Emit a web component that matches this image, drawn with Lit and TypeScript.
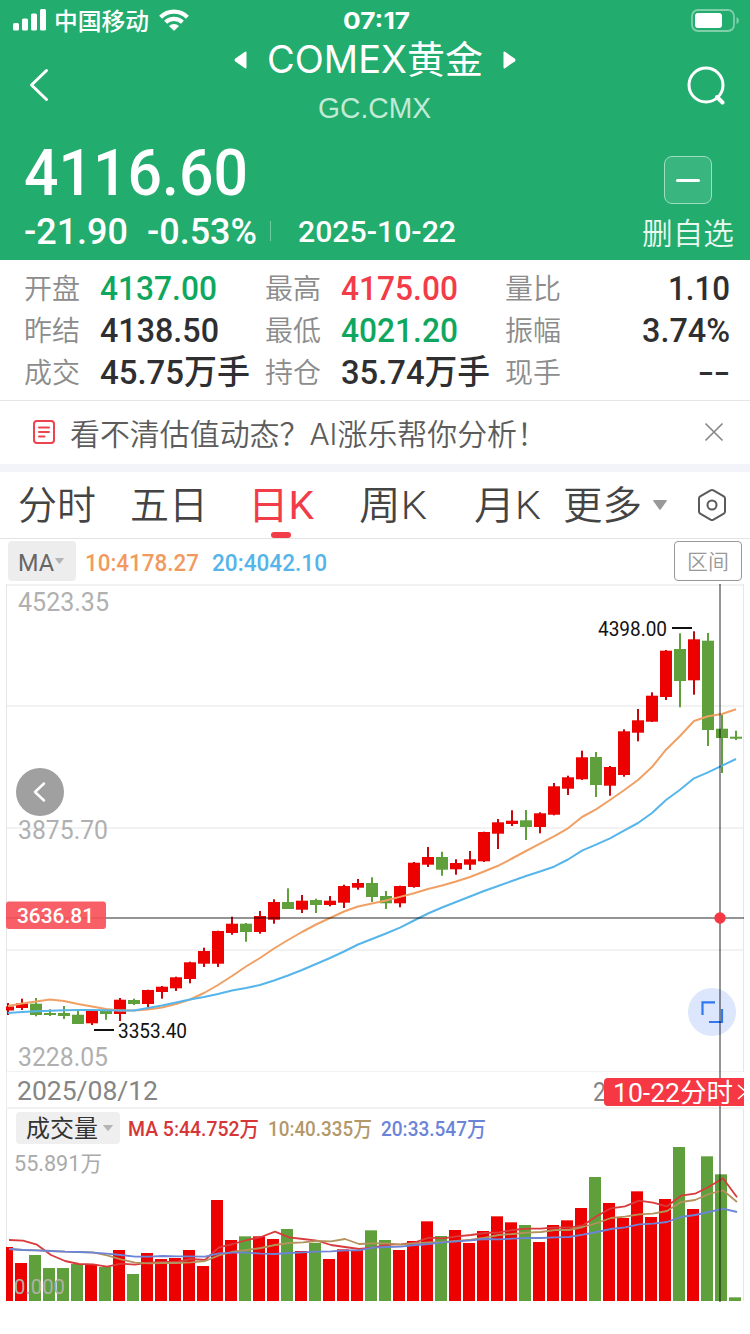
import { LitElement, html, svg, css } from "lit";
import { customElement, property } from "lit/decorators.js";

type Candle = [up: number, top: number, bottom: number, high: number, low: number];

const STEP = 14;
const candles: Candle[] = [
  [1, 1006.5, 1010.5, 1003, 1015], [1, 1003.3, 1008, 998.7, 1010], [0, 1003.7, 1015, 998, 1016.3],
  [0, 1013, 1015, 1009.3, 1016], [0, 1013, 1016, 1006, 1019], [0, 1014.7, 1024, 1010.7, 1024],
  [1, 1010.7, 1023.3, 1009.3, 1025], [0, 1011, 1014, 1010, 1019.7], [1, 999.7, 1014, 998, 1021],
  [0, 1000, 1004, 998.7, 1005], [1, 990, 1004, 989.7, 1007], [1, 986.7, 992, 986, 998.7],
  [1, 977.3, 988.3, 976.7, 991], [1, 962.3, 979, 961.7, 983.3], [1, 951, 963.7, 947.7, 967],
  [1, 931, 963.7, 930.7, 967], [1, 923.7, 933, 916.7, 934.7], [0, 923.7, 932, 923, 941.7],
  [1, 916, 932, 911, 933.7], [1, 902, 919.7, 899.3, 923.7], [0, 902, 909, 888.3, 909],
  [1, 900.7, 909.7, 895, 913], [0, 900, 905, 898.7, 913], [1, 900.7, 905, 896, 906.3],
  [1, 886, 902.7, 884.7, 908], [1, 883, 887.7, 879, 889.7], [0, 883, 897, 877.3, 902],
  [0, 896, 903.3, 891, 909], [1, 886, 903.3, 885.7, 907.3], [1, 862.7, 887, 862, 887.7],
  [1, 857, 864.7, 847, 867], [0, 857, 869.7, 851.7, 875.7], [1, 863, 869.3, 859.3, 874.7],
  [1, 859.3, 864.7, 851, 870], [1, 832, 861.3, 831.7, 862], [1, 822.3, 833.7, 819, 849],
  [1, 820.7, 824, 810.3, 826], [0, 820.3, 827, 810, 840], [1, 813.3, 827, 812.3, 833.3],
  [1, 786.3, 814.7, 783, 815.3], [1, 777.3, 788.7, 775.7, 795], [1, 757.3, 779.3, 750.7, 780],
  [0, 757, 785, 752, 797], [1, 767, 785.7, 766, 795.7], [1, 731.3, 775, 729.3, 776.7],
  [1, 720.3, 732.7, 709, 741.3], [1, 695.7, 721.7, 692.3, 722], [1, 650.7, 697, 650, 700],
  [0, 649, 681, 633.3, 707.3], [1, 639.3, 680.3, 631.3, 694.7], [0, 640.7, 730, 633, 746],
  [0, 728.7, 738, 715, 773], [0, 736.7, 738.7, 730.7, 740],
];

const ma10 = [
  1006, 1003.5, 1001.5, 999.5, 1001, 1004, 1006.5, 1009, 1010.5, 1010.5, 1009.5, 1007.5, 1004, 999.5, 993, 985, 976,
  966.5, 958, 948.5, 940, 932, 924.5, 918, 911.5, 906.5, 903.5, 900.5, 896.9, 893.3, 889, 885.5, 881.5, 877, 871.5,
  865.8, 858.5, 851, 843.7, 836.3, 828.3, 817, 809.3, 800, 790.3, 780, 767, 749.7, 736, 721, 716.3, 714, 709.3,
];
const ma20 = [
  1013, 1012, 1011.3, 1010.7, 1010.2, 1010, 1010, 1010.3, 1010.5, 1010.5, 1008, 1005.5, 1002.5, 999.5, 997, 994, 990.5,
  988, 985, 980.5, 975.5, 970, 964, 958, 951.5, 944.5, 939, 933.5, 927.7, 920.5, 913.5, 907.5, 902, 896.5, 891, 886,
  881, 876, 871.5, 866.7, 859.5, 850.7, 844.7, 838.3, 830.7, 823, 813, 800, 789.7, 778.3, 772.3, 765.7, 759,
];

/* Heights are in thirds of a pixel, measured down from the volume pane's header. */
const volume = [
  531, 579, 555, 594, 594, 582, 582, 591, 540, 612, 549, 567, 564, 540, 588, 390, 510, 499, 499, 507, 477, 543, 519,
  567, 538, 540, 481, 510, 540, 513, 454, 498, 480, 519, 483, 439, 457, 465, 516, 465, 451, 414, 321, 399, 444, 364,
  441, 387, 231, 417, 259, 313, 682,
];
const vol5 = [
  510, 512, 524, 555, 573, 582, 583, 590, 581, 584, 578, 576, 576, 567, 570, 532, 522, 510, 501, 485, 502, 507, 512,
  525, 531, 537, 533, 524, 523, 517, 503, 505, 499, 495, 489, 487, 480, 476, 476, 472, 473, 466, 438, 415, 409, 392,
  398, 409, 377, 371, 350, 325, 382,
];
const vol10 = [
  537, 540, 541, 543, 545, 546, 547, 556, 568, 578, 580, 579, 579, 577, 573, 556, 545, 540, 534, 525, 519, 517, 513,
  514, 507, 522, 520, 520, 524, 520, 517, 516, 513, 509, 503, 495, 492, 488, 486, 480, 480, 471, 459, 444, 440, 433,
  431, 423, 396, 390, 372, 361, 396,
];
const vol20 = [
  537, 540, 541, 543, 545, 546, 548, 551, 555, 560, 560, 558, 559, 559, 560, 550, 548, 548, 551, 552, 549, 547, 545,
  544, 541, 541, 533, 531, 530, 525, 522, 517, 514, 511, 507, 508, 506, 504, 504, 502, 501, 494, 486, 477, 472, 463,
  461, 456, 441, 435, 426, 416, 426,
];

const volY = (v: number) => 1070 + v / 3;
const line = (ys: number[], dx = 8) => ys.map((y, i) => `${dx + i * STEP},${y.toFixed(1)}`).join(" ");

/** A single run of text set to an exact width; the box is as tall as the capitals. */
@customElement("fit-text")
export class FitText extends LitElement {
  @property() text = "";
  @property({ type: Number }) size = 24;
  @property({ type: Number }) width = 100;

  static styles = css`
    :host { display: block; flex: none; line-height: 0; }
    svg { display: block; overflow: visible; }
    text { fill: currentColor; white-space: pre; }
  `;

  render() {
    const h = Math.round(this.size * 0.71);
    return html`<svg width=${this.width} height=${h}>
      <text x="0" y=${h} font-size=${this.size} textLength=${this.width} lengthAdjust="spacingAndGlyphs">${this.text}</text>
    </svg>`;
  }
}

const fit = (text: string, size: number, width: number, cls = "") =>
  html`<fit-text class=${cls} .text=${text} .size=${size} .width=${width}></fit-text>`;

@customElement("app-root")
export class AppRoot extends LitElement {
  static styles = css`
    :host {
      display: block; width: 750px; height: 1334px; overflow: hidden; background: #fff; color: #333;
      font-family: Roboto, "Noto Sans CJK SC", sans-serif;
    }
    * { box-sizing: border-box; }
    svg { display: block; flex: none; }
    .head { height: 260px; background: #22ac6e; color: #fff; }
    .sans { font-family: Inter, "Noto Sans CJK SC", sans-serif; }
    .arial { font-family: "Liberation Sans", "Noto Sans CJK SC", sans-serif; }
    .medium { font-weight: 500; }
    .bold { font-weight: 700; }
    .light { font-weight: 350; }

    .status { height: 40px; display: grid; grid-template-columns: 1fr auto 1fr; align-items: center; padding: 0 11px 0 13px; }
    .carrier { display: flex; align-items: center; gap: 8px; }
    .carrier .name { margin-top: 3px; }
    .carrier .wifi { margin-left: 2px; }
    .battery { justify-self: end; }

    .nav { height: 90px; display: grid; grid-template-columns: 39px 1fr 39px; align-items: center; padding: 0 24px 0 29px; }
    .heading { display: flex; flex-direction: column; align-items: center; height: 90px; padding: 6px 0 0 0; margin-right: 6px; }
    .title { display: flex; align-items: center; gap: 20px; height: 27px; }
    .code { margin-top: 24px; color: #c3ead7; }

    .quote { display: flex; justify-content: space-between; height: 130px; padding: 0 16px 0 24px; }
    .price { margin-top: 19px; }
    .delta { display: flex; align-items: center; height: 26px; margin-top: 23px; }
    .delta .pct { margin-left: 19px; }
    .delta .sep { width: 1px; height: 20px; margin: 0 27px 0 13px; background: #6fcaa0; }
    .watch { display: flex; flex-direction: column; align-items: center; padding-top: 26px; }
    .minus { width: 48px; height: 48px; border: 1px solid #9fdcc0; border-radius: 8px; background: #39b57f; display: flex; align-items: center; justify-content: center; }
    .minus i { width: 24px; height: 3px; border-radius: 2px; background: #fff; }
    .watch .label { margin-top: 19px; color: #e9f8f0; }

    .facts { height: 141px; border-bottom: 1px solid #e6e6e6; padding: 8px 20px 0 24px; display: grid; grid-template-columns: 76px 165px 76px 164px 76px 1fr; grid-auto-rows: 42px; align-items: center; }
    .facts .k { color: #8c8c8c; }
    .facts .v { color: #2f2f31; font-weight: 500; margin-top: -2px; }
    .facts .end { justify-self: end; }
    .facts .down { color: #0fa75f; }
    .facts .up { color: #f23c48; }

    .banner { height: 71px; border-bottom: 8px solid #f3f4f9; display: flex; align-items: center; padding: 0 26px 1px 32px; color: #5c5c5c; }
    .banner .msg { margin: 4px auto 0 14px; }

    .tabs { height: 67px; border-bottom: 1px solid #e3e3e3; display: flex; align-items: center; padding-left: 18px; color: #444; }
    .tabs > * + * { margin-left: var(--gap, 0); }
    .tab2 { --gap: 34px; } .tab3 { --gap: 40px; } .tab4 { --gap: 45px; } .tab5 { --gap: 47px; } .tab6 { --gap: 22px; }
    .caret { --gap: 11px; } .gear { --gap: 29px; }
    .active { color: #f23c48; display: flex; flex-direction: column; align-items: center; height: 28px; }
    .active i { width: 20px; height: 6px; border-radius: 3px; background: #f23c48; margin: 13px 0 0 0; flex: none; }

    .ma { height: 45px; display: flex; align-items: center; padding: 0 8px 1px; }
    .chip { display: flex; align-items: center; background: #ededed; border-radius: 4px; flex: none; }
    .ma .chip { width: 68px; height: 40px; padding-left: 10px; gap: 1px; color: #666; }
    .ma .chip fit-text { margin-top: 3px; }
    .ma .a { margin: 3px 0 0 9px; color: #f19a60; }
    .ma .b { margin: 3px 0 0 13px; color: #55b4ea; }
    .range { margin-left: auto; width: 68px; height: 40px; border: 1px solid #999; border-radius: 4px; display: flex; align-items: center; justify-content: center; color: #999; }

    .chart { position: relative; height: 750px; }
    .dates { height: 36px; margin: 0 6px; padding: 2px 0 0 10px; display: flex; align-items: center; justify-content: space-between; border-left: 1px solid #ececec; color: #858585; overflow: hidden; }
    .dates .last { display: flex; align-items: center; margin-top: 2px; }
    .tag { height: 28px; width: 140px; margin-left: -2px; background: #f53844; border-radius: 4px 0 0 4px; color: #fff; display: flex; align-items: center; padding-left: 9px; gap: 4px; overflow: hidden; }
    .tag fit-text { margin-top: 2px; }
    .legend { height: 40px; display: flex; align-items: center; padding: 0 16px; }
    .legend .chip { width: 104px; height: 32px; background: #efefef; padding-left: 10px; gap: 5px; color: #333; }
    .legend .five { margin: 0 0 0 8px; color: #d63637; }
    .legend .ten { margin: 0 0 0 9px; color: #b3986a; }
    .legend .twenty { margin: 0 0 0 9px; color: #6c84d8; }
    .volumes { overflow: visible; }
    .overlay { position: absolute; left: 0; top: 0; }
  `;

  private caret(w: number, h: number, color: string, cls = "") {
    return html`<svg class=${cls} width=${w} height=${h} viewBox="0 0 10 6" preserveAspectRatio="none"><path d="M.5 0H9.5Q10.2 0 9.8.6L5.6 5.6Q5 6.2 4.4 5.6L.2.6Q-.2 0 .5 0Z" fill=${color} /></svg>`;
  }

  private header() {
    return html`<header class="head">
      <div class="status">
        <div class="carrier">
          <svg width="33" height="22" fill="#fff"><rect y="14" width="6" height="7.500" rx="1.5" /><rect x="9" y="9.500" width="6" height="12" rx="1.500" /><rect x="18" y="4.500" width="6" height="17" rx="1.500" /><rect x="27" y="0" width="6" height="21.500" rx="1.500" /></svg>
          ${fit("中国移动", 23.5, 95, "name medium")}
          <svg class="wifi" width="30" height="22" viewBox="0 0 30 22"><g fill="none" stroke="#fff" stroke-width="4.2"><path d="M1.600 8.200A19 19 0 0 1 28.400 8.200" /><path d="M6.600 13.300A12 12 0 0 1 23.400 13.300" /></g><path d="M10 16.900A7.200 7.200 0 0 1 20 16.900L15.700 21.300Q15 22 14.300 21.300Z" fill="#fff" /></svg>
        </div>
        ${fit("07:17", 23.5, 67, "sans bold")}
        <svg class="battery" width="48" height="23"><rect x="1" y="1" width="42" height="21" rx="6" fill="none" stroke="#7fcfa9" stroke-width="1.800" /><rect x="4" y="4" width="27" height="15" rx="3" fill="#fff" /><path d="M45.500 8Q48 9 48 11.500T45.500 15Z" fill="#7fcfa9" /></svg>
      </div>
      <div class="nav">
        <svg width="20" height="34" fill="none" stroke="#fff" stroke-width="3" stroke-linecap="round" stroke-linejoin="round"><path d="M17.500 2.500L2.500 17L17.500 31.500" /></svg>
        <div class="heading">
          <div class="title">
            <svg width="13" height="18"><path d="M12.500 1.500V16.500Q12.500 18 11 17.200L1 10.200Q0 9 1 7.800L11 .8Q12.500 0 12.500 1.500Z" fill="#fff" /></svg>
            ${fit("COMEX黄金", 38, 216, "sans")}
            <svg width="13" height="18"><path d="M.5 1.500V16.500Q.5 18 2 17.200L12 10.200Q13 9 12 7.800L2 .8Q.5 0 .5 1.500Z" fill="#fff" /></svg>
          </div>
          ${fit("GC.CMX", 29, 113, "code arial")}
        </div>
        <svg width="39" height="39" fill="none" stroke="#fff" stroke-width="3"><circle cx="19" cy="19" r="17" /><path d="M30 31L35.500 36.500" stroke-width="4" stroke-linecap="round" /></svg>
      </div>
      <div class="quote">
        <div>
          ${fit("4116.60", 65, 224, "price medium")}
          <div class="delta">
            ${fit("-21.90", 36, 104, "medium")}${fit("-0.53%", 36, 110, "pct medium")}<i class="sep"></i>${fit("2025-10-22", 30, 158, "medium")}
          </div>
        </div>
        <div class="watch"><div class="minus"><i></i></div>${fit("删自选", 30, 92, "label light")}</div>
      </div>
    </header>`;
  }

  private facts() {
    return html`<section class="facts">
      ${fit("开盘", 28, 56, "k light")}${fit("4137.00", 34, 117, "v down")}
      ${fit("最高", 28, 56, "k light")}${fit("4175.00", 34, 117, "v up")}
      ${fit("量比", 28, 56, "k light")}${fit("1.10", 34, 62, "v end")}
      ${fit("昨结", 28, 56, "k light")}${fit("4138.50", 34, 119, "v")}
      ${fit("最低", 28, 56, "k light")}${fit("4021.20", 34, 117, "v down")}
      ${fit("振幅", 28, 56, "k light")}${fit("3.74%", 34, 88, "v end")}
      ${fit("成交", 28, 56, "k light")}${fit("45.75万手", 34, 150, "v")}
      ${fit("持仓", 28, 56, "k light")}${fit("35.74万手", 34, 149, "v")}
      ${fit("现手", 28, 56, "k light")}${fit("--", 34, 32, "v end")}
    </section>`;
  }

  private tabs() {
    return html`<nav class="tabs">
      ${fit("分时", 39, 78, "light")}${fit("五日", 39, 78, "tab2 light")}
      <div class="active tab3">${fit("日K", 39, 66)}<i></i></div>
      ${fit("周K", 39, 68, "tab4 light")}${fit("月K", 39, 67, "tab5 light")}${fit("更多", 39, 79, "tab6 light")}
      ${this.caret(14, 10, "#999", "caret")}
      <svg class="gear" width="32" height="34" fill="none" stroke="#5a5a5a" stroke-width="2"><path d="M14.500 2.300Q16 1.500 17.500 2.300L27.800 8.300Q29 9 29 10.500V23.500Q29 25 27.800 25.700L17.500 31.700Q16 32.500 14.500 31.700L4.200 25.700Q3 25 3 23.500V10.500Q3 9 4.200 8.300Z" /><circle cx="16" cy="17" r="4.500" /></svg>
    </nav>`;
  }

  private price() {
    return html`<svg width="750" height="488" viewBox="0 584 750 488">
      <g fill="#f2f2f2">${[584, 705, 827, 949, 1071].map((y) => svg`<rect x="6" y=${y} width="738" height="2" />`)}
        <rect x="6" y="584" width="1" height="488" fill="#e6e6e6" /><rect x="743" y="584" width="1" height="488" fill="#e6e6e6" /></g>
      <g font-size="26" fill="#b0b0b0">
        <text x="18" y="611" textLength="91" lengthAdjust="spacingAndGlyphs">4523.35</text>
        <text x="18" y="838.500" textLength="90" lengthAdjust="spacingAndGlyphs">3875.70</text>
        <text x="18" y="1066" textLength="90" lengthAdjust="spacingAndGlyphs">3228.05</text>
      </g>
      <clipPath id="pane"><rect x="6" y="584" width="738" height="488" /></clipPath>
      <g clip-path="url(#pane)">
        ${candles.map(([up, top, bottom, high, low], i) => {
          const x = 8 + i * STEP;
          return svg`<rect x=${x - 1} y=${high} width="2" height=${low - high} fill=${up ? "#c40810" : "#5f9f3c"} /><rect x=${x - 6} y=${top} width="12" height=${bottom - top} fill=${up ? "#ec0000" : "#5f9f3c"} />`;
        })}
      </g>
      <g fill="none" stroke-width="2" stroke-linejoin="round">
        <polyline points=${line(ma10)} stroke="#f0a064" /><polyline points=${line(ma20)} stroke="#56b5ea" />
      </g>
      <g font-size="20" fill="#111">
        <rect x="94" y="1029" width="20" height="2" /><text x="118" y="1038" textLength="69" lengthAdjust="spacingAndGlyphs">3353.40</text>
        <rect x="672" y="627" width="20" height="2" /><text x="598" y="636" textLength="69" lengthAdjust="spacingAndGlyphs">4398.00</text>
      </g>
    </svg>`;
  }

  private volumes() {
    return html`<svg class="volumes" width="750" height="186" viewBox="0 1148 750 186">
      <rect x="6" y="1109" width="1" height="192" fill="#e6e6e6" /><rect x="743" y="1109" width="1" height="192" fill="#e6e6e6" />
      <text x="14" y="1171" font-size="22" fill="#aaa" textLength="88" lengthAdjust="spacingAndGlyphs">55.891万</text>
      ${volume.map((v, i) => {
        const x = Math.max(6, 1 + i * STEP);
        return svg`<rect x=${x} y=${volY(v)} width=${i ? 12 : 7} height=${1301 - volY(v)} fill=${candles[i][0] ? "#ec0000" : "#5f9f3c"} />`;
      })}
      <g fill="none" stroke-width="1.800" stroke-linejoin="round">
        <polyline points=${line(vol5.map(volY), 9)} stroke="#d93a3c" />
        <polyline points=${line(vol10.map(volY), 9)} stroke="#b3925c" />
        <polyline points=${line(vol20.map(volY), 9)} stroke="#6c84d8" />
      </g>
      <text x="14" y="1294" font-size="21" fill="#b0b0a8" textLength="51" lengthAdjust="spacingAndGlyphs">0.000</text>
    </svg>`;
  }

  private overlay() {
    return html`<svg class="overlay" width="750" height="750" viewBox="0 584 750 750">
      <rect x="6" y="1107" width="738" height="2" fill="#f2f2f2" />
      <circle cx="712" cy="1012" r="24" fill="#dce7fd" />
      <path d="M702.500 1015V1002.300H715M722 1009V1022H709" fill="none" stroke="#2f78f0" stroke-width="2.200" />
      <circle cx="40" cy="792" r="24" fill="#a0a0a0" />
      <path d="M44 783.500L35 792L44 800.500" fill="none" stroke="#fff" stroke-width="2.500" stroke-linecap="round" stroke-linejoin="round" />
      <g fill="#000" fill-opacity=".42"><rect x="719" y="584" width="2" height="494" /><rect x="719" y="1106" width="2" height="196" /><rect x="6" y="917" width="738" height="2" /></g>
      <rect x="6" y="901.500" width="100" height="27.500" rx="3" fill="#f84e57" fill-opacity=".9" />
      <text x="17" y="923" font-size="21" font-weight="500" fill="#fff" textLength="77" lengthAdjust="spacingAndGlyphs">3636.81</text>
      <circle cx="720" cy="918" r="5.700" fill="#f53844" />
    </svg>`;
  }

  render() {
    return html`
      ${this.header()}
      ${this.facts()}
      <section class="banner">
        <svg width="24" height="26" fill="none" stroke="#ee4450" stroke-width="2"><rect x="2" y="2" width="20" height="22" rx="3" /><path d="M7 8.500H17M7 13H17M7 17.500H12.500" stroke-linecap="round" /></svg>
        ${fit("看不清估值动态？AI涨乐帮你分析！", 30, 477, "msg sans light")}
        <svg width="20" height="20" fill="none" stroke="#888" stroke-width="1.700"><path d="M1.500 1.500L18.500 18.500M18.500 1.500L1.500 18.500" /></svg>
      </section>
      ${this.tabs()}
      <div class="ma">
        <div class="chip">${fit("MA", 24, 36)}${this.caret(9, 6, "#b5b5b5")}</div>
        ${fit("10:4178.27", 24, 114, "a medium")}${fit("20:4042.10", 24, 115, "b medium")}
        <div class="range">${fit("区间", 21, 42, "light")}</div>
      </div>
      <div class="chart">
        ${this.price()}
        <div class="dates">
          ${fit("2025/08/12", 25, 141)}
          <div class="last">${fit("2", 25, 13)}<div class="tag">${fit("10-22分时", 26, 120)}
            <svg width="12" height="18" fill="none" stroke="#fff" stroke-width="1.600"><path d="M1 2L9 9L1 16" /></svg></div></div>
        </div>
        <div class="legend">
          <div class="chip">${fit("成交量", 24, 72)}${this.caret(10, 6, "#b5b5b5")}</div>
          ${fit("MA 5:44.752万", 21, 131, "five medium")}${fit("10:40.335万", 21, 104, "ten medium")}${fit("20:33.547万", 21, 105, "twenty medium")}
        </div>
        ${this.volumes()}
        ${this.overlay()}
      </div>`;
  }
}
